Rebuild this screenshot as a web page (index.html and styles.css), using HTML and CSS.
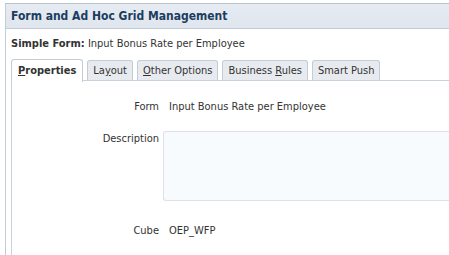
FILE: index.html
```html
<!DOCTYPE html>
<html lang="en">
<head>
  <meta charset="UTF-8">
  <title>Form and Ad Hoc Grid Management</title>
  <link rel="stylesheet" href="styles.css">
</head>
<body>

  <div class="panel">
    <div class="panel-header">Form and Ad Hoc Grid Management</div>

    <div class="panel-body">
      <div class="form-title"><b>Simple Form:</b> Input Bonus Rate per Employee</div>

      <div class="tabs">
        <div class="tab active"><u>P</u>roperties</div>
        <div class="tab">La<u>y</u>out</div>
        <div class="tab"><u>O</u>ther Options</div>
        <div class="tab">Business <u>R</u>ules</div>
        <div class="tab">Smart Push</div>
      </div>

      <div class="tab-panel">
        <div class="row">
          <div class="label">Form</div>
          <div class="value">Input Bonus Rate per Employee</div>
        </div>
        <div class="row row-desc">
          <div class="label">Description</div>
          <div class="textarea"></div>
        </div>
        <div class="row row-cube">
          <div class="label">Cube</div>
          <div class="value">OEP_WFP</div>
        </div>
      </div>
    </div>
  </div>

</body>
</html>
```

FILE: styles.css
```css
html, body {
  margin: 0;
  height: 255px;
  overflow: hidden;
}

body {
  font-family: 'DejaVu Sans Condensed', 'DejaVu Sans', sans-serif;
  font-stretch: condensed;
  font-size: 11px;
  color: #333;
  background: #fff;
}

.panel {
  margin: 3px 0 0 5px;
  border-left: 1px solid #c4ccd5;
  border-top: 1px solid #b9c3cd;
  height: 251px;
}

.panel-header {
  height: 24px;
  line-height: 25px;
  padding-left: 5px;
  background: linear-gradient(#e6ebf2, #dfe6ee);
  border-bottom: 1px solid #c3ccd6;
  color: #1d3d5e;
  font-weight: bold;
  font-size: 12px;
}

.panel-body {
  padding-left: 5px;
}

.form-title {
  height: 30px;
  line-height: 30px;
}

.form-title b {
  color: #333;
}

.tabs {
  display: flex;
  gap: 4px;
  border-bottom: 1px solid #c9d1da;
  height: 21px;
}

.tab {
  padding: 0 5px;
  line-height: 20px;
  background: #e7ebef;
  border: 1px solid #c4ccd5;
  border-bottom: none;
  border-radius: 3px 3px 0 0;
  margin-top: 1px;
  color: #333;
}

.tab.active {
  padding: 0 6px;
  background: #fff;
  font-weight: bold;
  margin-top: 0;
  height: 22px;
  line-height: 22px;
}

.tab u {
  text-decoration: underline;
}

.tab-panel {
  box-sizing: border-box;
  border-left: 1px solid #c9d1da;
  height: 174px;
  padding-top: 19px;
}

.row {
  display: flex;
  gap: 10px;
}

.label {
  width: 147px;
  text-align: right;
}

.row-desc {
  margin-top: 18px;
  gap: 4px;
}

.row-desc .label {
  padding-top: 1px;
}

.textarea {
  flex: 1;
  height: 68px;
  background: #f7fbfe;
  border: 1px solid #dce2e8;
  border-right: none;
  border-radius: 3px 0 0 3px;
}

.row-cube {
  margin-top: 23px;
}
```
